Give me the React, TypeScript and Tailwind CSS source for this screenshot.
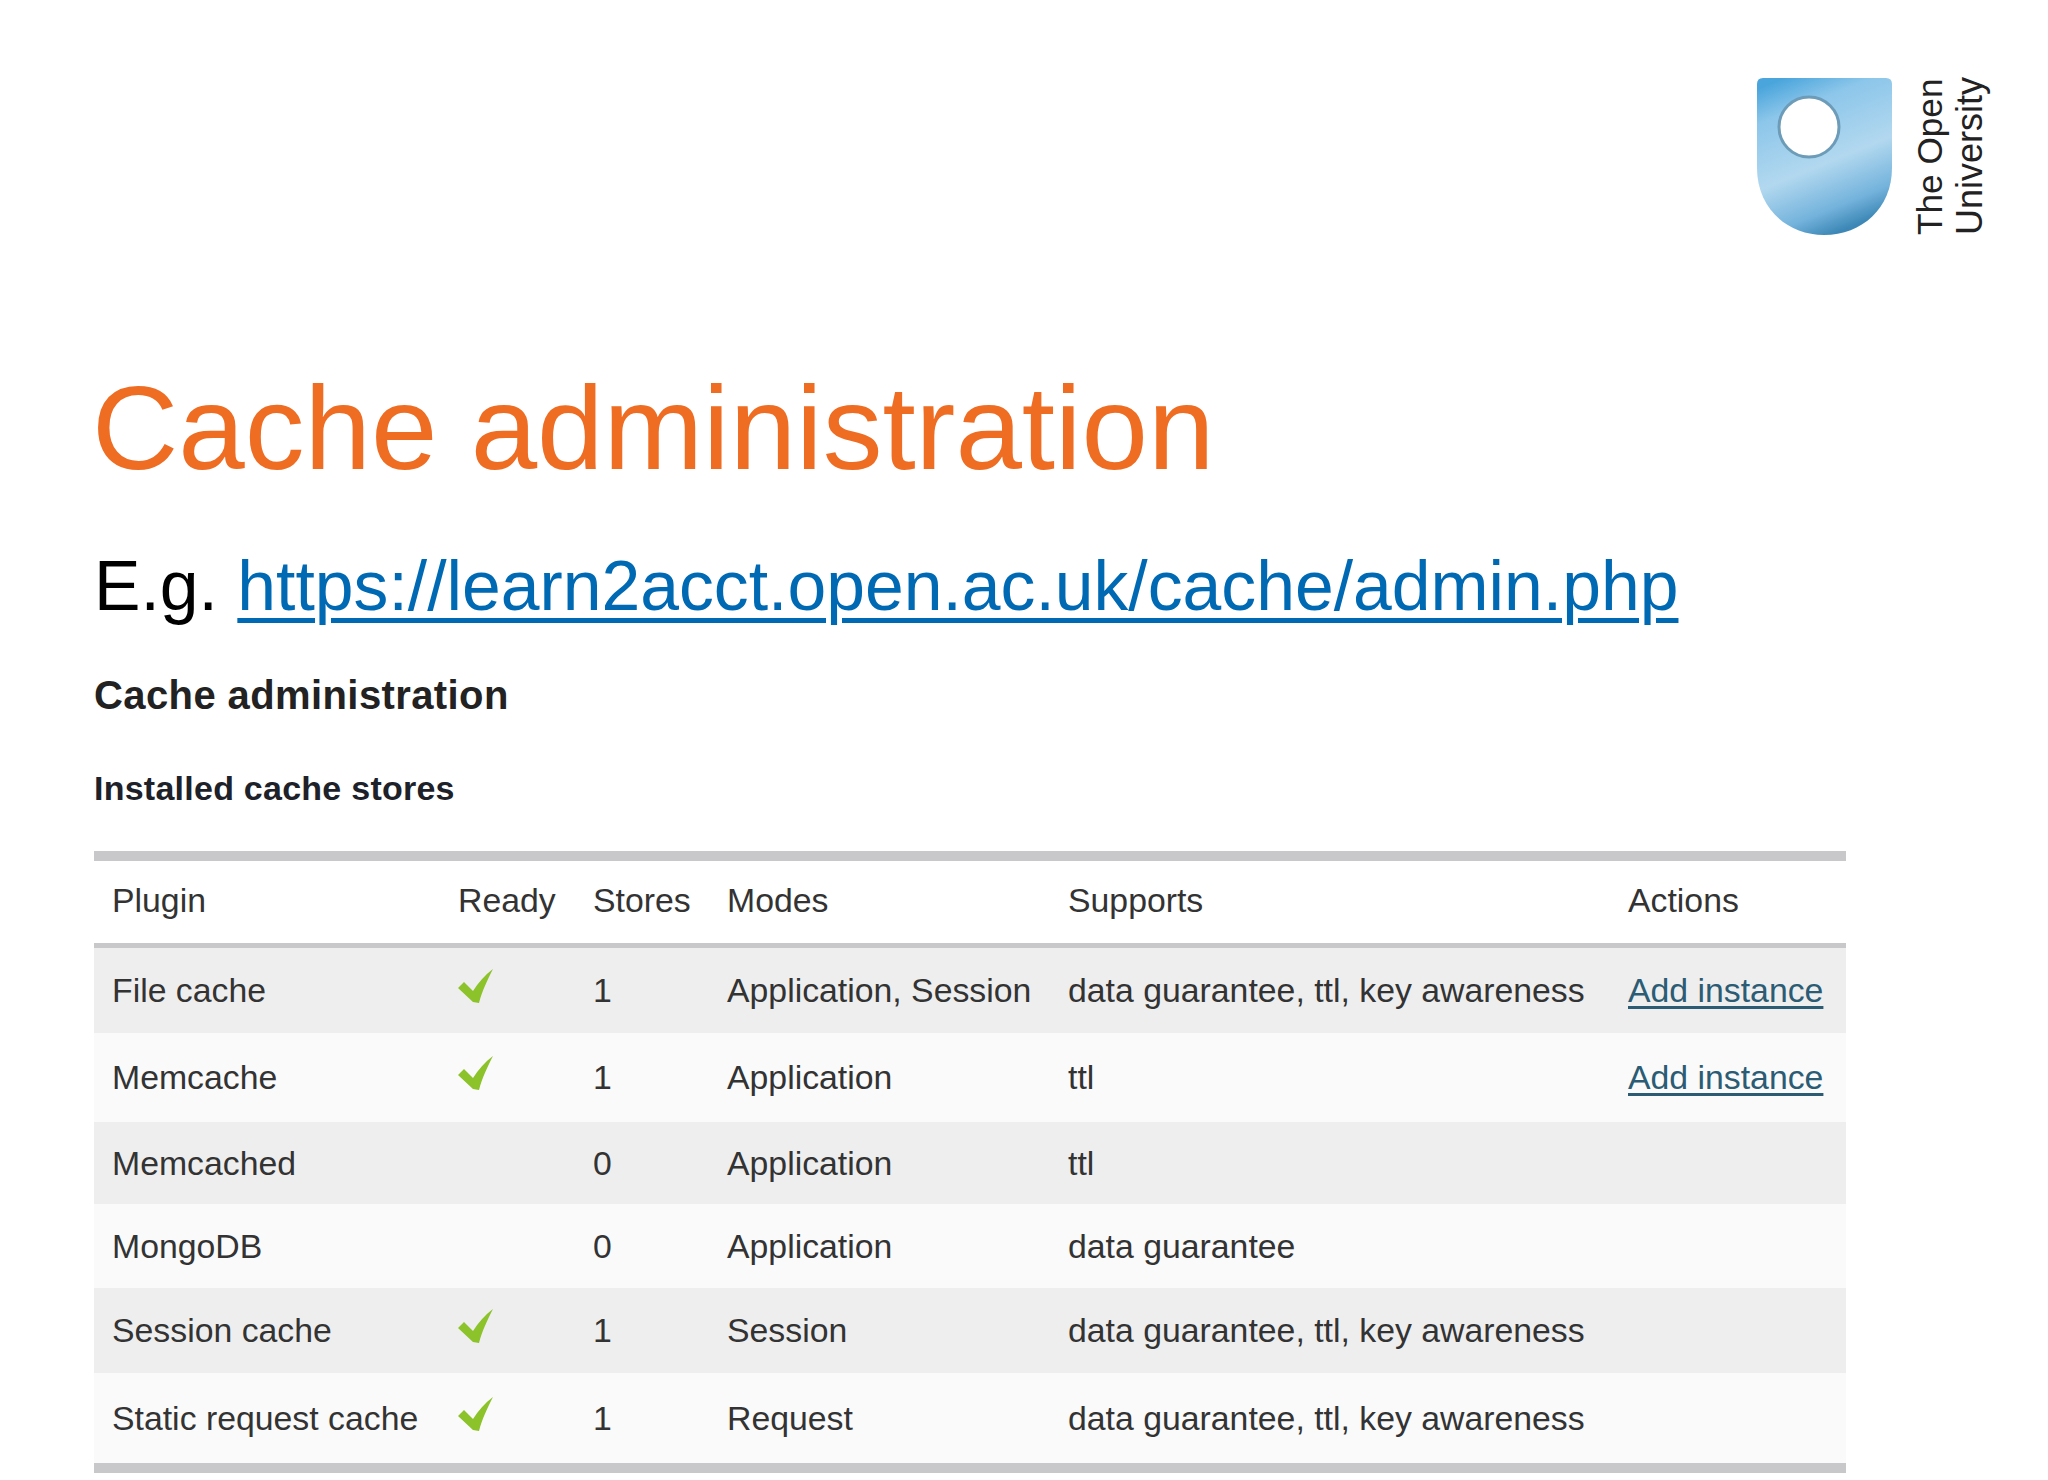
const rows = [
  { name: "File cache", ready: true, stores: "1", modes: "Application, Session", supports: "data guarantee, ttl, key awareness", action: true, height: "h-[85px]", bg: "bg-[#eeeeef]" },
  { name: "Memcache", ready: true, stores: "1", modes: "Application", supports: "ttl", action: true, height: "h-[89px]", bg: "bg-[#fafafb]" },
  { name: "Memcached", ready: false, stores: "0", modes: "Application", supports: "ttl", action: false, height: "h-[82px]", bg: "bg-[#eeeeef]" },
  { name: "MongoDB", ready: false, stores: "0", modes: "Application", supports: "data guarantee", action: false, height: "h-[84px]", bg: "bg-[#fafafb]" },
  { name: "Session cache", ready: true, stores: "1", modes: "Session", supports: "data guarantee, ttl, key awareness", action: false, height: "h-[85px]", bg: "bg-[#eeeeef]" },
  { name: "Static request cache", ready: true, stores: "1", modes: "Request", supports: "data guarantee, ttl, key awareness", action: false, height: "h-[90px]", bg: "bg-[#fafafb]" },
];

function Check() {
  return (
    <svg width="35" height="35" viewBox="0 0 35 35" className="block -mt-[10px]">
      <path d="M0 20 L6 14 L15 23 C20 15 27 7 35 1 C30 11 24 23 21 35 L15 34 Z" fill="#8cc22a" />
    </svg>
  );
}

function Logo() {
  return (
    <div className="flex items-start gap-[18px]">
      <svg width="135" height="157" viewBox="0 0 135 157" className="block">
        <defs>
          <linearGradient id="shield" x1="0.2" y1="0" x2="0.55" y2="1">
            <stop offset="0" stopColor="#4aa5dc" />
            <stop offset="0.2" stopColor="#8cc6ea" />
            <stop offset="0.58" stopColor="#b2d8ef" />
            <stop offset="0.85" stopColor="#74b3dc" />
            <stop offset="1" stopColor="#3c87b6" />
          </linearGradient>
        </defs>
        <path d="M6 0 H129 Q135 0 135 6 V90 C135 130 105 157 67 157 C30 157 0 130 0 90 V6 Q0 0 6 0 Z" fill="url(#shield)" />
        <circle cx="52" cy="49" r="30" fill="#ffffff" stroke="#6d9cb8" strokeWidth="3" />
      </svg>
      <div className="h-[157px] w-[80px]">
        <div className="flex w-[157px] origin-top-left translate-y-[157px] -rotate-90 flex-col whitespace-nowrap text-[36px] leading-[40px] text-[#222222]">
          <span className="text-[35.2px]">The Open</span>
          <span>University</span>
        </div>
      </div>
    </div>
  );
}

export default function App() {
  return (
    <div className="relative h-[1480px] w-[2048px] overflow-hidden bg-white pl-[94px] font-['Liberation_Sans',Arial,sans-serif]">
      <div className="absolute right-[58px] top-[78px]">
        <Logo />
      </div>
      <h1 className="-ml-[2px] pt-[359px] text-[119.5px] leading-[138px] text-[#ef6c23]">Cache administration</h1>
      <p className="mt-[49px] text-[69.7px] leading-[80px] text-black">
        E.g.{" "}
        <a href="#" className="text-[#0069b4] underline decoration-[5px] underline-offset-[8px]">
          https://learn2acct.open.ac.uk/cache/admin.php
        </a>
      </p>
      <h2 className="mt-[46px] text-[40px] font-bold leading-[46px] tracking-[0.4px] text-[#222222]">Cache administration</h2>
      <h3 className="mt-[50px] text-[34px] font-bold leading-[40px] tracking-[0.25px] text-[#1d2129]">Installed cache stores</h3>
      <table className="mt-[43px] w-[1752px] table-fixed border-separate border-spacing-0 text-left text-[33.8px] text-[#333333]">
        <colgroup>
          <col className="w-[364px]" />
          <col className="w-[135px]" />
          <col className="w-[134px]" />
          <col className="w-[341px]" />
          <col className="w-[560px]" />
          <col className="w-[218px]" />
        </colgroup>
        <thead>
          <tr className="h-[97px] bg-white">
            {["Plugin", "Ready", "Stores", "Modes", "Supports", "Actions"].map((label, i) => (
              <th
                key={label}
                className={`border-t-[10px] border-b-[5px] border-[#c8c8ca] pb-[3px] font-normal ${i === 0 ? "pl-[18px]" : ""}`}
              >
                {label}
              </th>
            ))}
          </tr>
        </thead>
        <tbody>
          {rows.map((row) => (
            <tr key={row.name} className={`${row.height} ${row.bg}`}>
              <td className="pl-[18px]">{row.name}</td>
              <td>{row.ready ? <Check /> : null}</td>
              <td>{row.stores}</td>
              <td>{row.modes}</td>
              <td>{row.supports}</td>
              <td>
                {row.action ? (
                  <a href="#" className="text-[#2b5c74] underline underline-offset-4">
                    Add instance
                  </a>
                ) : null}
              </td>
            </tr>
          ))}
        </tbody>
      </table>
      <div className="h-[10px] w-[1752px] bg-[#c8c8ca]" />
    </div>
  );
}
